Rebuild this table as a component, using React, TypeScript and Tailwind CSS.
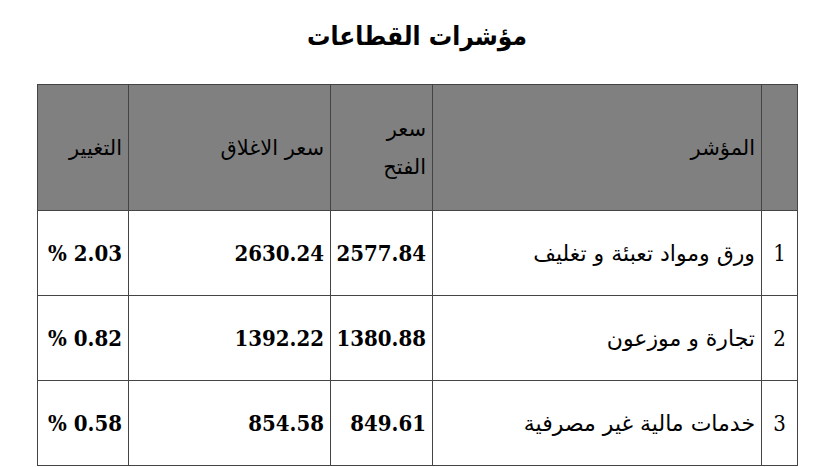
const rows = [
  { n: 1, name: 'ورق ومواد تعبئة و تغليف', open: '2577.84', close: '2630.24', change: '% 2.03' },
  { n: 2, name: 'تجارة و موزعون', open: '1380.88', close: '1392.22', change: '% 0.82' },
  { n: 3, name: 'خدمات مالية غير مصرفية', open: '849.61', close: '854.58', change: '% 0.58' },
]

const cell = 'border border-[#444] px-[6px] align-middle'
const num = "font-['DejaVu_Serif',serif] font-bold text-[22px] [font-stretch:condensed] text-black"

export default function App() {
  return (
    <div className="w-[830px] h-[467px] bg-white overflow-hidden font-['DejaVu_Sans',sans-serif]">
      <h1
        dir="rtl"
        className="pt-[16px] pl-[37px] w-[797px] text-center text-[26px] font-bold [font-stretch:condensed] text-black leading-[40px]"
      >
        مؤشرات القطاعات
      </h1>
      <table dir="rtl" className="ml-[37px] mt-[28px] w-[760px] border-collapse table-fixed">
        <colgroup>
          <col className="w-[36px]" />
          <col className="w-[329px]" />
          <col className="w-[102px]" />
          <col className="w-[202px]" />
          <col className="w-[91px]" />
        </colgroup>
        <thead>
          <tr className="h-[126px] bg-[#808080] text-black text-[21px] leading-[38px]">
            <th className={`${cell} font-normal`}></th>
            <th className={`${cell} font-normal text-right`}>المؤشر</th>
            <th className={`${cell} font-normal text-right`}>
              سعر
              <br />
              الفتح
            </th>
            <th className={`${cell} font-normal text-right`}>سعر الاغلاق</th>
            <th className={`${cell} font-normal text-right`}>التغيير</th>
          </tr>
        </thead>
        <tbody>
          {rows.map((r) => (
            <tr key={r.n} className="h-[85px]">
              <td className={`${cell} text-center font-['DejaVu_Serif',serif] text-[22px] [font-stretch:condensed]`}>
                {r.n}
              </td>
              <td className={`${cell} text-right text-[22px] text-black`}>{r.name}</td>
              <td className={`${cell} text-right ${num}`}>{r.open}</td>
              <td className={`${cell} text-right ${num}`}>{r.close}</td>
              <td className={`${cell} text-right ${num}`} dir="ltr">
                <span className="block text-right">{r.change}</span>
              </td>
            </tr>
          ))}
        </tbody>
      </table>
    </div>
  )
}
